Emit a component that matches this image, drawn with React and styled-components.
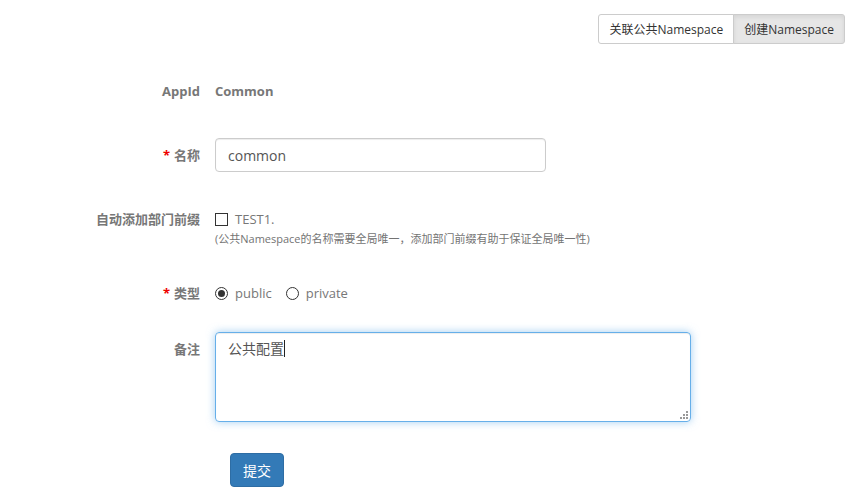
import React from 'react';
import styled, { createGlobalStyle } from 'styled-components';

const GlobalStyle = createGlobalStyle`
  body {
    margin: 0;
    background: #fff;
    font-family: "Open Sans", "Noto Sans CJK SC", sans-serif;
    font-size: 13px;
    color: #555;
  }
  * { box-sizing: border-box; }
`;

const Page = styled.div`
  width: 860px;
  height: 497px;
  overflow: hidden;
`;

const Header = styled.div`
  display: flex;
  justify-content: flex-end;
  padding: 14px 15px 0;
`;

const BtnGroup = styled.div`
  display: flex;
`;

const GroupBtn = styled.button`
  height: 30px;
  padding: 0 10px;
  font: inherit;
  font-size: 12px;
  color: #333;
  background: ${p => (p.$active ? '#e6e6e6' : '#fff')};
  border: 1px solid #ccc;
  border-radius: ${p => (p.$first ? '3px 0 0 3px' : '0 3px 3px 0')};
  margin-left: ${p => (p.$first ? '0' : '-1px')};
  box-shadow: ${p => (p.$active ? 'inset 0 2px 4px rgba(0,0,0,.08)' : 'none')};
`;

const Form = styled.div`
  padding-top: 30px;
`;

const Row = styled.div`
  display: grid;
  grid-template-columns: 200px 1fr;
  column-gap: 15px;
  margin-bottom: ${p => p.$mb || 0}px;
  min-height: ${p => p.$h || 0}px;
`;

const Label = styled.div`
  text-align: right;
  padding-top: 7px;
  line-height: 20px;
  font-weight: bold;
  color: #777;
  font-size: 13px;
`;

const Star = styled.span`
  color: #e00;
  margin-right: 4px;
`;

const StaticValue = styled.div`
  padding-top: 7px;
  line-height: 20px;
  font-weight: bold;
  color: #777;
`;

const TextInput = styled.input`
  width: 331px;
  height: 34px;
  padding: 6px 12px;
  font: inherit;
  font-size: 14px;
  color: #555;
  border: 1px solid #ccc;
  border-radius: 4px;
  box-shadow: inset 0 1px 1px rgba(0,0,0,.075);
  outline: none;
`;

const Control = styled.div`
  display: flex;
  flex-direction: column;
`;

const OptionLine = styled.div`
  display: flex;
  align-items: center;
  gap: ${p => p.$gap || 7}px;
  padding-top: 7px;
  height: 27px;
  color: #777;
  font-size: 13px;
`;

const Option = styled.label`
  display: flex;
  align-items: center;
  gap: 7px;
`;

const Box = styled.span`
  width: 13px;
  height: 13px;
  border: 1px solid #333;
  background: #fff;
`;

const Radio = styled.span`
  width: 13px;
  height: 13px;
  border: 1px solid #333;
  border-radius: 50%;
  display: flex;
  align-items: center;
  justify-content: center;
  &::after {
    content: '';
    width: 7px;
    height: 7px;
    border-radius: 50%;
    background: ${p => (p.$checked ? '#333' : 'transparent')};
  }
`;

const Help = styled.div`
  margin-top: 2px;
  font-size: 11px;
  line-height: 16px;
  color: #737373;
`;

const TextArea = styled.div`
  position: relative;
  width: 476px;
  height: 90px;
  padding: 6px 12px;
  font-size: 14px;
  line-height: 20px;
  color: #555;
  border: 1px solid #66afe9;
  border-radius: 4px;
  box-shadow: inset 0 1px 1px rgba(0,0,0,.075), 0 0 8px rgba(102,175,233,.6);
`;

const Caret = styled.span`
  display: inline-block;
  width: 1px;
  height: 17px;
  background: #222;
  vertical-align: -3px;
`;

const Grip = styled.svg`
  position: absolute;
  right: 2px;
  bottom: 2px;
`;

const Submit = styled.button`
  margin-left: 230px;
  width: 54px;
  height: 34px;
  font: inherit;
  font-size: 14px;
  color: #fff;
  background: #337ab7;
  border: 1px solid #2e6da4;
  border-radius: 4px;
`;

export default function App() {
  return (
    <Page>
      <GlobalStyle />
      <Header>
        <BtnGroup>
          <GroupBtn $first>关联公共Namespace</GroupBtn>
          <GroupBtn $active>创建Namespace</GroupBtn>
        </BtnGroup>
      </Header>
      <Form>
        <Row $mb={30} $h={34}>
          <Label>AppId</Label>
          <StaticValue>Common</StaticValue>
        </Row>
        <Row $mb={30} $h={34}>
          <Label><Star>*</Star>名称</Label>
          <div><TextInput value="common" readOnly /></div>
        </Row>
        <Row $mb={29} $h={43}>
          <Label>自动添加部门前缀</Label>
          <Control>
            <OptionLine>
              <Option><Box />TEST1.</Option>
            </OptionLine>
            <Help>(公共Namespace的名称需要全局唯一，添加部门前缀有助于保证全局唯一性)</Help>
          </Control>
        </Row>
        <Row $mb={22} $h={34}>
          <Label><Star>*</Star>类型</Label>
          <OptionLine $gap={14}>
            <Option><Radio $checked />public</Option>
            <Option><Radio />private</Option>
          </OptionLine>
        </Row>
        <Row $mb={31} $h={90}>
          <Label>备注</Label>
          <div>
            <TextArea>
              公共配置<Caret />
              <Grip width="8" height="8" viewBox="0 0 8 8">
                <g fill="#999">
                  <rect x="6" y="0" width="2" height="2" />
                  <rect x="3" y="3" width="2" height="2" />
                  <rect x="6" y="3" width="2" height="2" />
                  <rect x="0" y="6" width="2" height="2" />
                  <rect x="3" y="6" width="2" height="2" />
                  <rect x="6" y="6" width="2" height="2" />
                </g>
              </Grip>
            </TextArea>
          </div>
        </Row>
        <Submit>提交</Submit>
      </Form>
    </Page>
  );
}
